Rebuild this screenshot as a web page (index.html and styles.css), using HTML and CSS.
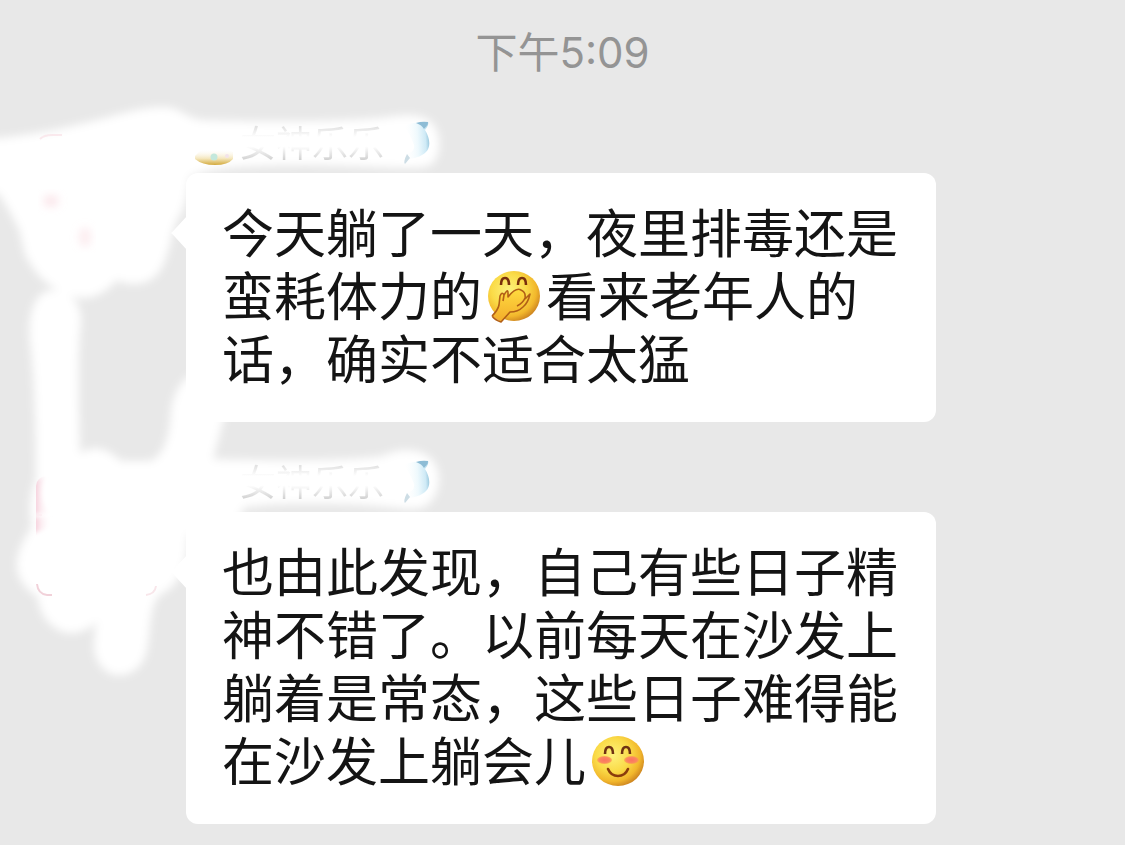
FILE: index.html
```html
<!DOCTYPE html>
<html lang="zh-CN">
<head>
<meta charset="utf-8">
<meta name="viewport" content="width=device-width, initial-scale=1">
<title>聊天</title>
<link rel="stylesheet" href="styles.css">
</head>
<body>
<main class="chat">
  <svg class="smudge" width="460" height="700" viewBox="0 0 460 700" aria-hidden="true">
    <defs>
      <filter id="soft" x="-10%" y="-10%" width="120%" height="120%"><feGaussianBlur stdDeviation="4"/></filter>
      <filter id="faint" x="-20%" y="-20%" width="140%" height="140%"><feGaussianBlur stdDeviation="2"/></filter>
    </defs>
    <g fill="#fff" filter="url(#soft)">
      <path d="M-20 139 L0 138 C40 134 80 125 120 114 C140 109 150 107 163 107 C180 107 186 118 202 120 C260 122 330 122 380 118 C405 114 423 113 433 124 C442 136 441 155 432 164 C420 172 390 166 300 165 C240 166 205 168 190 178 C187 195 186 208 176 222 C170 240 169 255 161 269 C151 286 130 287 117 280 C108 291 94 299 80 298 C54 292 38 278 30 263 C20 250 24 235 15 222 C8 208 4 202 -2 193 L-20 190Z"/>
      <path d="M54 290 C72 290 82 305 81 323 C77 355 79 410 80 453 C98 443 110 451 121 461 L150 461 C164 456 170 435 171 410 C174 392 180 382 192 374 L225 415 C220 432 217 445 213 459 C270 461 350 461 383 456 C402 446 424 449 434 462 C443 476 439 497 426 506 C412 513 390 505 340 504 C290 503 260 504 244 508 L230 535 L188 535 C188 560 182 585 161 594 C149 603 151 630 147 650 C143 669 128 677 115 675 C98 671 91 652 95 636 Q94 628 98 621 C86 633 69 637 57 629 C42 620 39 606 37 596 C22 588 15 572 17 560 C19 546 27 535 32 526 C28 508 31 490 36 478 C36 440 35 385 31 350 C26 318 33 290 54 290Z"/>
    </g>
  </svg>

  <time class="time">下午5:09</time>

  <article class="message">
    <svg class="avatar" viewBox="0 0 120 120" aria-hidden="true">
      <g fill="#f8cfd8" filter="url(#soft)">
        <ellipse cx="15" cy="65" rx="8" ry="6" opacity=".5"/>
        <ellipse cx="49" cy="101" rx="6" ry="10" opacity=".4"/>
      </g>
      <path d="M4 3 Q8 -1 16 -1 H26" fill="none" stroke="#f8dce2" stroke-width="2" opacity=".6"/>
    </svg>
    <div class="body">
      <div class="name">
        <svg class="crown" viewBox="0 0 40 42" aria-hidden="true">
          <defs><linearGradient id="gold" x1="0" y1="0" x2="0" y2="1"><stop offset="0" stop-color="#fff" stop-opacity="0"/><stop offset=".6" stop-color="#f4e6bb"/><stop offset="1" stop-color="#d3aa3e"/></linearGradient></defs>
          <path d="M1 34 L8 27 H32 L39 30 V37 Q34 43 21 43 Q8 43 1 37Z" fill="url(#gold)"/>
          <circle cx="20" cy="35" r="3.500" fill="#c4e8dc"/>
          <circle cx="33" cy="34" r="2" fill="#f3e3ea"/>
        </svg>
        <span class="nick">女神乐乐</span>
        <svg class="dolphin" viewBox="0 0 28 44" aria-hidden="true">
          <defs><linearGradient id="sea" x1="0" y1=".5" x2="1" y2=".4"><stop offset="0" stop-color="#fff" stop-opacity="0"/><stop offset=".55" stop-color="#eef9fd"/><stop offset=".85" stop-color="#cfeaf6"/><stop offset="1" stop-color="#9cc9de"/></linearGradient></defs>
          <path d="M2 5 Q10 1 26 1 Q27 4 23 9 C28 17 29 26 24 31 C19 36 12 37 8 38 L3 43 Q1 41 5 33 Q13 31 12 24 Q8 13 2 5Z" fill="url(#sea)"/>
          <path d="M14 2 Q20 0 26 1 Q26 4 22 8 Q20 4 14 2Z" fill="#8ebcd5"/>
          <path d="M8 37 L3 43 Q1 41 5 33" fill="#cddde5"/>
        </svg>
      </div>
      <p class="bubble">今天躺了一天，夜里排毒还是蛮耗体力的<svg class="emoji" viewBox="0 0 54 54" aria-hidden="true">
          <defs>
            <radialGradient id="face" cx=".4" cy=".38" r=".66"><stop offset="0" stop-color="#fdf17c"/><stop offset=".5" stop-color="#fadb48"/><stop offset=".8" stop-color="#f2b72c"/><stop offset="1" stop-color="#cb8220"/></radialGradient>
            <linearGradient id="hand" x1="0" y1="0" x2="0" y2="1"><stop offset="0" stop-color="#ffdb3f"/><stop offset="1" stop-color="#f3ac2a"/></linearGradient>
          </defs>
          <ellipse cx="27" cy="26" rx="26" ry="25" fill="url(#face)"/>
          <path d="M14 15 Q14 8 18 8 Q22 8 22 15 M31 15 Q31 8 35 8 Q39 8 39 15" fill="none" stroke="#792f0c" stroke-width="2.6"/>
          <path d="M12 36 L13 25 Q16 21 17 26 Q21 19 22 25 Q29 17 34 20 Q39 22 38 29 L43 24 Q41 33 36 37 C31 42 27 42 23 42 L14 52 L5 46 Q11 41 12 36Z" fill="url(#hand)"/>
          <path d="M5 46 Q11 40 12 35 L13 26 Q15 21 17 25 L16 31 M17 25 Q21 18 21 23 L21 27 Q29 17 34 20 Q39 22 38 28 Q36 33 30 36 M38 29 L43 24 Q41 33 36 37 Q31 42 23 42 L14 52 Q8 50 5 46" fill="none" stroke="#b25f16" stroke-width="1.600" stroke-linejoin="round"/>
        </svg>看来老年人的话，确实不适合太猛</p>
    </div>
  </article>

  <article class="message">
    <svg class="avatar" viewBox="0 0 120 120" aria-hidden="true">
      <defs>
        <linearGradient id="rose" x1="0" y1="0" x2="1" y2="0"><stop offset="0" stop-color="#f3bccd"/><stop offset="1" stop-color="#fff" stop-opacity="0"/></linearGradient>
        <clipPath id="frame"><rect y="1" width="120" height="120" rx="10"/></clipPath>
      </defs>
      <g clip-path="url(#frame)">
        <path d="M-4 6 Q2 3 9 1 Q4 14 6 24 Q8 34 15 39 H-4Z" fill="url(#rose)" filter="url(#faint)"/>
        <path d="M-4 42 H13 Q18 48 12 52 Q6 56 -4 58Z" fill="url(#rose)" filter="url(#faint)"/>
        <path d="M0 40 H6" stroke="#fbe8ee" stroke-width="1"/>
      </g>
      <path d="M1 109 Q2 119 11 120 H16" fill="none" stroke="#eec5d0" stroke-width="2" opacity=".8"/>
      <path d="M110 120 Q119 119 120 111" fill="none" stroke="#f8e6ea" stroke-width="2"/>
    </svg>
    <div class="body">
      <div class="name">
        <span class="crown"></span>
        <span class="nick">女神乐乐</span>
        <svg class="dolphin" viewBox="0 0 28 44" aria-hidden="true">
          <path d="M2 5 Q10 1 26 1 Q27 4 23 9 C28 17 29 26 24 31 C19 36 12 37 8 38 L3 43 Q1 41 5 33 Q13 31 12 24 Q8 13 2 5Z" fill="url(#sea)"/>
          <path d="M14 2 Q20 0 26 1 Q26 4 22 8 Q20 4 14 2Z" fill="#8ebcd5"/>
          <path d="M8 37 L3 43 Q1 41 5 33" fill="#cddde5"/>
        </svg>
      </div>
      <p class="bubble">也由此发现，自己有些日子精神不错了。以前每天在沙发上躺着是常态，这些日子难得能在沙发上躺会儿<svg class="emoji" viewBox="0 0 54 54" aria-hidden="true">
          <defs><radialGradient id="blush"><stop offset="0" stop-color="#fb7460"/><stop offset=".7" stop-color="#fb8760"/><stop offset="1" stop-color="#fca04c" stop-opacity=".7"/></radialGradient></defs>
          <ellipse cx="27" cy="26" rx="26" ry="25" fill="url(#face)"/>
          <path d="M14 19 Q14 12 18 12 Q22 12 22 19 M31 19 Q31 12 35 12 Q39 12 39 19" fill="none" stroke="#6f3212" stroke-width="2.600"/>
          <ellipse cx="13.500" cy="25" rx="7.500" ry="4" fill="url(#blush)"/>
          <ellipse cx="40.500" cy="25" rx="7.500" ry="4" fill="url(#blush)"/>
          <path d="M17 34 Q20 41 27 41 Q34 41 37 34" fill="none" stroke="#8a3c0c" stroke-width="2.600" stroke-linecap="round"/>
        </svg></p>
    </div>
  </article>
</main>
</body>
</html>
```
FILE: styles.css
```css
* {
  box-sizing: border-box;
}

body {
  margin: 0;
  background: #e8e8e8;
  color: #141414;
  font-family: Inter, "Noto Sans CJK SC", sans-serif;
}

.chat {
  position: relative;
  display: flex;
  flex-direction: column;
  padding: 22px 36px 21px;
}

/* White brush marks that hide the sender */
.smudge {
  position: absolute;
  top: 0;
  left: 0;
  pointer-events: none;
}

.time {
  align-self: center;
  margin-bottom: 40px;
  color: #949494;
  font-size: 42px;
  line-height: 62px;
}

.message {
  position: relative;
  display: flex;
  gap: 30px;
}

.message + .message {
  margin-top: 41px;
}

.avatar {
  flex: none;
  width: 120px;
  height: 120px;
  margin-top: 12px;
  overflow: visible;
}

.body {
  flex: 0 1 750px;
  margin-right: 153px;
}

.name {
  display: flex;
  align-items: center;
  gap: 6px;
  height: 38px;
  margin-bottom: 11px;
  padding-left: 8px;
}

.crown {
  flex: none;
  width: 40px;
  height: 42px;
  overflow: visible;
}

.nick {
  padding-bottom: 4px;
  font-family: "Noto Sans CJK SC", sans-serif;
  font-size: 36px;
  line-height: 38px;
  color: transparent;
  background: linear-gradient(#e2e2e2 12%, #fff 36%, #fff 58%, #cecece 92%);
  background-clip: text;
  -webkit-background-clip: text;
}

.dolphin {
  flex: none;
  width: 28px;
  height: 44px;
  margin-left: 12px;
}

.bubble {
  position: relative;
  margin: 0;
  padding: 26px 36px 34px;
  border-radius: 12px;
  background: #fff;
  font-family: "Noto Sans CJK SC", sans-serif;
  font-size: 52px;
  line-height: 63px;
}

.bubble::before {
  content: "";
  position: absolute;
  top: 43px;
  left: -15px;
  width: 16px;
  height: 34px;
  background: #fff;
  clip-path: polygon(100% 0, 2px 45%, 0 50%, 2px 55%, 100% 100%);
}

.emoji {
  width: 54px;
  height: 54px;
  margin: 0 5px;
  vertical-align: -8px;
}
```
